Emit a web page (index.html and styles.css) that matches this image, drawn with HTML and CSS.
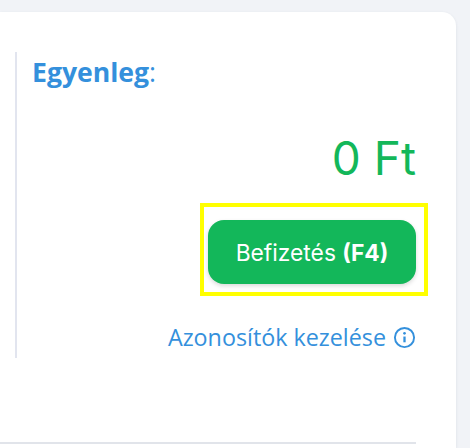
FILE: index.html
```html
<!DOCTYPE html>
<html lang="hu">
<head>
<meta charset="utf-8">
<title>Egyenleg</title>
<link rel="stylesheet" href="styles.css">
</head>
<body>
<main class="card">
  <section class="balance">
    <h2 class="title"><strong>Egyenleg</strong>:</h2>
    <div class="amount">0 Ft</div>
    <div class="highlight">
      <button class="pay" type="button">Befizetés <b>(F4)</b></button>
    </div>
    <a class="manage" href="#">Azonosítók kezelése
      <svg class="info" viewBox="0 0 24 24" width="23" height="23" aria-hidden="true">
        <circle cx="12" cy="12" r="10" fill="none" stroke="currentColor" stroke-width="2"/>
        <path d="M12 11v6" fill="none" stroke="currentColor" stroke-width="2.4"/>
        <circle cx="12" cy="7.6" r="1.4" fill="currentColor"/>
      </svg>
    </a>
  </section>
  <hr class="rule">
</main>
</body>
</html>
```
FILE: styles.css
```css
html, body { margin: 0; padding: 0; }
body {
  width: 470px;
  height: 448px;
  overflow: hidden;
  background: #f1f3f7;
  font-family: "Inter", "Liberation Sans", sans-serif;
}
.card {
  box-sizing: border-box;
  width: 456px;
  height: 436px;
  margin-top: 12px;
  padding: 40px 0 0 15px;
  background: #fff;
  border-radius: 0 14px 0 0;
  box-shadow: 0 1px 3px rgba(60, 70, 100, .12);
}
.balance {
  box-sizing: border-box;
  width: 401px;
  height: 306px;
  padding-left: 15px;
  border-left: 2px solid #e2e5ef;
  display: flex;
  flex-direction: column;
  align-items: flex-end;
}
.title {
  align-self: flex-start;
  margin: 0;
  font-family: "Open Sans", sans-serif;
  font-size: 26.6px;
  line-height: 40px;
  font-weight: 400;
  color: #3490dc;
}
.title strong { font-weight: 700; }
.amount {
  margin-top: 38px;
  font-size: 46px;
  line-height: 56px;
  color: #13b75a;
}
.highlight {
  box-sizing: border-box;
  width: 228px;
  height: 93px;
  margin: 17px -12px 0 0;
  border: 4px solid #ffff00;
  padding: 13px 8px 0 4px;
}
.pay {
  display: block;
  width: 208px;
  height: 64px;
  border: 0;
  border-radius: 16px;
  background: #13b75a;
  color: #fff;
  font-family: "Inter", sans-serif;
  font-size: 22.8px;
  box-shadow: 0 2px 4px rgba(0, 0, 0, .15);
}
.pay b { font-weight: 700; }
.manage {
  display: flex;
  align-items: center;
  gap: 7px;
  margin-top: 24px;
  font-family: "Open Sans", sans-serif;
  font-size: 23.3px;
  line-height: 34px;
  color: #3490dc;
  text-decoration: none;
}
.info { flex: none; }
.rule {
  width: 416px;
  height: 2px;
  margin: 84px 0 0 -15px;
  border: 0;
  background: #e1e4ea;
}
```
